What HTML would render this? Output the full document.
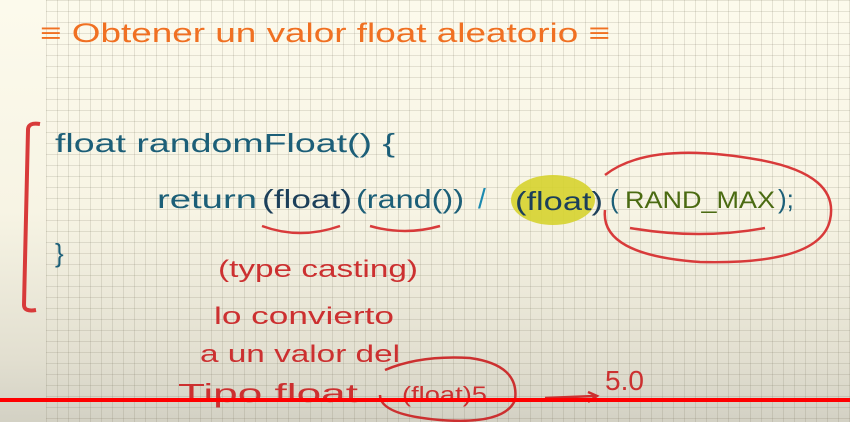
<!DOCTYPE html>
<html><head><meta charset="utf-8"><style>
html,body{margin:0;padding:0}
body{width:850px;height:422px;overflow:hidden;position:relative;background:linear-gradient(#fcfaec 0%,#f7f4e4 50%,#e2dfd0 85%,#d3d1c4 100%);font-family:"Liberation Sans",sans-serif}
.grid{position:absolute;left:46px;top:0;width:804px;height:422px;
background-image:linear-gradient(90deg,rgba(120,115,95,.18) 1px,transparent 1px),linear-gradient(rgba(120,115,95,.18) 1px,transparent 1px);
background-size:11px 11px}
svg{position:absolute;left:0;top:0}
</style></head><body>
<div class="grid"></div>
<svg width="850" height="422" viewBox="0 0 850 422">
<g font-family="Liberation Sans, sans-serif">
<text x="40" y="42" fill="#f07022" font-size="27" textLength="570" lengthAdjust="spacingAndGlyphs">≡ Obtener un valor float aleatorio ≡</text>
<path d="M40 124 Q28 122 28 130 L24 305 Q24 312 36 310" stroke="#d83a3a" stroke-width="4" fill="none"/>
<text x="55" y="152" fill="#1c5f78" font-size="26" textLength="340" lengthAdjust="spacingAndGlyphs">float  randomFloat() {</text>
<text x="157" y="208" fill="#1c5f78" font-size="26" textLength="100" lengthAdjust="spacingAndGlyphs">return</text>
<text x="262" y="208" fill="#1c3f5a" font-size="26" textLength="90" lengthAdjust="spacingAndGlyphs">(float)</text>
<text x="356" y="208" fill="#1c5f78" font-size="26" textLength="108" lengthAdjust="spacingAndGlyphs">(rand())</text>
<text x="478" y="208" fill="#1c8ab0" font-size="28">/</text>
<ellipse cx="553" cy="200" rx="42" ry="25" fill="#d6d32e" opacity=".9"/>
<text x="515" y="210" fill="#1c3f5a" font-size="26" textLength="88" lengthAdjust="spacingAndGlyphs">(float)</text>
<text x="610" y="208" fill="#1c5f78" font-size="26">(</text>
<text x="625" y="208" fill="#4b6b12" font-size="24" textLength="150" lengthAdjust="spacingAndGlyphs">RAND_MAX</text>
<text x="778" y="208" fill="#1c5f78" font-size="26">);</text>
<text x="55" y="262" fill="#1c5f78" font-size="26">}</text>
<path d="M605 175 Q650 140 760 160 Q840 175 830 220 Q820 265 700 262 Q600 255 605 210" stroke="#d83a3a" stroke-width="2.5" fill="none"/>
<path d="M630 228 Q700 240 765 228" stroke="#d83a3a" stroke-width="2.5" fill="none"/>
<path d="M262 226 Q300 240 340 226" stroke="#d83a3a" stroke-width="2.5" fill="none"/>
<path d="M370 226 Q405 236 440 226" stroke="#d83a3a" stroke-width="2.5" fill="none"/>
<g fill="#cc3030" font-size="24">
<text x="218" y="277" textLength="200" lengthAdjust="spacingAndGlyphs">(type casting)</text>
<text x="214" y="324" textLength="180" lengthAdjust="spacingAndGlyphs">lo convierto</text>
<text x="200" y="362" textLength="200" lengthAdjust="spacingAndGlyphs">a un valor del</text>
<text x="178" y="402" font-size="26" textLength="180" lengthAdjust="spacingAndGlyphs">Tipo  float</text>
<text x="402" y="402" font-size="22" textLength="85" lengthAdjust="spacingAndGlyphs">(float)5</text>
<text x="605" y="390" font-size="28">5.0</text>
</g>
<path d="M385 370 Q420 355 470 358 Q520 365 515 400 Q505 425 440 420 Q380 415 380 395" stroke="#cc3030" stroke-width="2.5" fill="none"/>
<path d="M545 398 L595 396 M588 392 L597 396 L588 402" stroke="#cc3030" stroke-width="2.5" fill="none"/>
</g>
<rect x="0" y="398" width="850" height="4" fill="#ff0000"/>
</svg>
</body></html>
